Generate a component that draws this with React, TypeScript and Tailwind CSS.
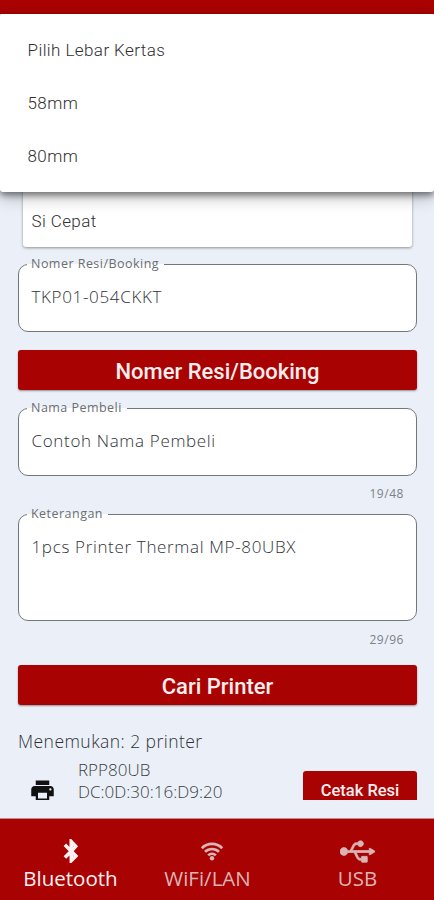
import type { ReactNode } from 'react';
import { FaBluetoothB, FaUsb } from 'react-icons/fa';
import { MdPrint } from 'react-icons/md';

const paperOptions = ['Pilih Lebar Kertas', '58mm', '80mm'];

function PaperMenu() {
  return (
    <ul className="absolute inset-x-0 top-[14px] z-10 h-[178px] rounded-[3px] bg-white pt-[10px] font-[Roboto,sans-serif] shadow-[0_3px_6px_rgba(0,0,0,0.45),0_6px_16px_rgba(0,0,0,0.25)]">
      {paperOptions.map((option) => (
        <li
          key={option}
          className="flex h-[53px] items-center pl-[27.5px] text-[17px] font-[350] tracking-[0.42px] text-[#303030]"
        >
          {option}
        </li>
      ))}
    </ul>
  );
}

function WifiIcon() {
  return (
    <svg
      viewBox="0 0 24 20"
      className="ml-[8px] mt-[2px] h-[20px] w-[24px]"
      fill="none"
      stroke="currentColor"
      strokeWidth="2.7"
    >
      <path d="M1.8 7.2a14.4 14.4 0 0 1 20.4 0" />
      <path d="M5 10.9a9.9 9.9 0 0 1 14 0" />
      <path d="M8.2 14.4a5.4 5.4 0 0 1 7.6 0" />
      <circle cx="12" cy="17.2" r="2.2" fill="currentColor" stroke="none" />
    </svg>
  );
}

function Field({
  label,
  value,
  className,
}: {
  label: string;
  value: string;
  className: string;
}) {
  return (
    <fieldset
      className={`rounded-[10px] border border-[#72777a] bg-white px-[8px] ${className}`}
    >
      <legend className="px-[4px] pr-[5px] text-[12.5px] leading-[16px] tracking-[0.47px] text-[#6a6e71]">
        {label}
      </legend>
      <p className="pl-[4.5px] pt-[13px] text-[17px] font-[350] leading-[24px] tracking-[0.66px] text-[#303336]">
        {value}
      </p>
    </fieldset>
  );
}

function Counter({ children }: { children: ReactNode }) {
  return (
    <p className="pr-[13px] text-right text-[12px] leading-[16px] tracking-[0.55px] text-[#7d8185]">
      {children}
    </p>
  );
}

function Button({ children }: { children: ReactNode }) {
  return (
    <button className="block h-[40px] w-full rounded-[3px] bg-[#a90202] pt-[2px] font-[Roboto,sans-serif] text-[22px] font-medium text-[#fbeeee] shadow-[0_1px_2px_rgba(0,0,0,0.4)]">
      {children}
    </button>
  );
}

export default function App() {
  return (
    <div className="relative flex h-[900px] w-full flex-col overflow-hidden bg-[#ebf0f8] font-['Open_Sans',sans-serif]">
      <header className="h-[14px] shrink-0 bg-[#a90202]" />
      <PaperMenu />

      <main className="h-[786px] shrink-0 overflow-hidden pl-[18px] pr-[17px] pt-[174px]">
        <div className="ml-[5px] mr-[5px] flex h-[59px] items-center rounded-[3px] bg-white pl-[8.5px] pt-[8px] font-[Roboto,sans-serif] text-[17px] font-[350] tracking-[0.4px] text-[#303030] shadow-[0_1px_3px_rgba(0,0,0,0.4)]">
          Si Cepat
        </div>

        <Field
          label="Nomer Resi/Booking"
          value="TKP01-054CKKT"
          className="mt-[9px] h-[76px]"
        />

        <div className="mt-[18px]">
          <Button>Nomer Resi/Booking</Button>
        </div>

        <Field
          label="Nama Pembeli"
          value="Contoh Nama Pembeli"
          className="mt-[10px] h-[76px]"
        />
        <div className="mt-[10px]">
          <Counter>19/48</Counter>
        </div>

        <Field
          label="Keterangan"
          value="1pcs Printer Thermal MP-80UBX"
          className="mt-[4px] h-[115px]"
        />
        <div className="mt-[11px]">
          <Counter>29/96</Counter>
        </div>

        <div className="mt-[17px]">
          <Button>Cari Printer</Button>
        </div>

        <p className="mt-[24px] text-[17.5px] font-[350] leading-[24px] tracking-[0.45px] text-[#303336]">
          Menemukan: 2 printer
        </p>

        <div className="mt-[6px] flex h-[38px] items-start">
          <MdPrint className="ml-[11px] mt-[18px] size-[27px] text-[#111]" />
          <div className="ml-[22px] flex-1 text-[17px] font-[350] leading-[22px] text-[#3a3d41]">
            <p>RPP80UB</p>
            <p>DC:0D:30:16:D9:20</p>
          </div>
          <button className="mt-[12px] h-[38px] w-[114px] shrink-0 rounded-[3px] bg-[#a90202] pt-[3px] font-[Roboto,sans-serif] text-[16.5px] font-medium text-[#fbeeee]">
            Cetak Resi
          </button>
        </div>
      </main>

      <nav className="mt-[18px] flex h-[82px] shrink-0 border-t border-[#c98a8e] bg-[#a90202] text-[20.5px] leading-[26px] text-[#d9b5b5]">
        <a className="flex w-[141px] flex-col items-center pt-[20px] font-medium text-[#fff2f2]">
          <FaBluetoothB className="size-[24px] stroke-current stroke-[32px]" />
          <span className="mt-[2px]">Bluetooth</span>
        </a>
        <a className="flex w-[133px] flex-col items-center pt-[20px]">
          <WifiIcon />
          <span className="mt-[4px]">WiFi/LAN</span>
        </a>
        <a className="flex flex-1 flex-col items-center pl-[7px] pt-[15px]">
          <FaUsb className="size-[35px] stroke-current stroke-[14px]" />
          <span className="-mt-[4px]">USB</span>
        </a>
      </nav>
    </div>
  );
}
